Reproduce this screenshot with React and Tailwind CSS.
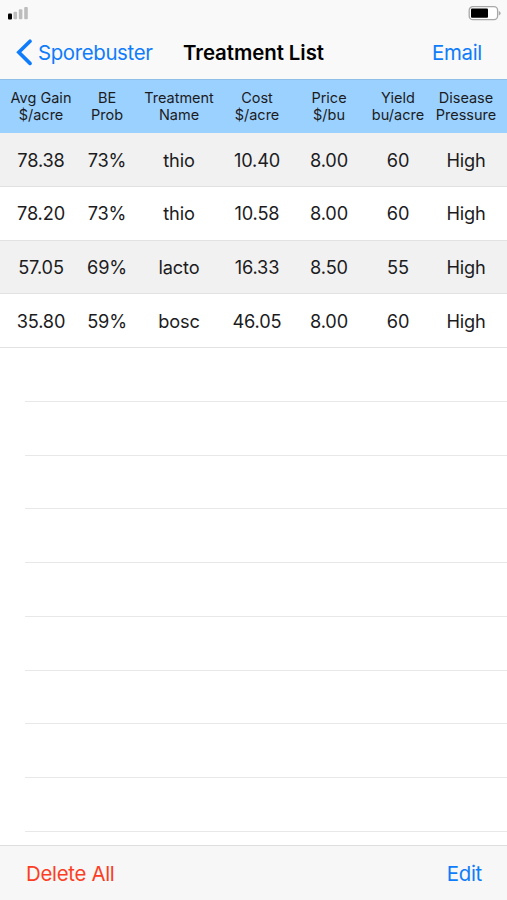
import clsx from "clsx";

const columns = [
  { top: "Avg Gain", bottom: "$/acre", key: "gain" },
  { top: "BE", bottom: "Prob", key: "prob" },
  { top: "Treatment", bottom: "Name", key: "name" },
  { top: "Cost", bottom: "$/acre", key: "cost" },
  { top: "Price", bottom: "$/bu", key: "price" },
  { top: "Yield", bottom: "bu/acre", key: "yield" },
  { top: "Disease", bottom: "Pressure", key: "pressure" },
];

const treatments = [
  { gain: "78.38", prob: "73%", name: "thio", cost: "10.40", price: "8.00", yield: "60", pressure: "High" },
  { gain: "78.20", prob: "73%", name: "thio", cost: "10.58", price: "8.00", yield: "60", pressure: "High" },
  { gain: "57.05", prob: "69%", name: "lacto", cost: "16.33", price: "8.50", yield: "55", pressure: "High" },
  { gain: "35.80", prob: "59%", name: "bosc", cost: "46.05", price: "8.00", yield: "60", pressure: "High" },
];

const EMPTY_ROWS = 9;

const gridCols = "grid grid-cols-[82px_50px_94px_62px_82px_56px_80px]";

function StatusBar() {
  return (
    <div className="flex h-[26px] items-start justify-between pl-2 pr-[6px] pt-[6px]">
      <svg width="20" height="14" viewBox="0 0 20 14">
        <rect x="0" y="7.5" width="4" height="6" rx="1" fill="#000" />
        <rect x="5.5" y="5.7" width="3.6" height="7.5" rx="1" fill="#bdbdbd" />
        <rect x="10.8" y="3.3" width="3.6" height="9.9" rx="1" fill="#bdbdbd" />
        <rect x="16.2" y="1" width="3.6" height="12.2" rx="1" fill="#bdbdbd" />
      </svg>
      <svg width="33" height="15" viewBox="0 0 33 15">
        <rect x="1.2" y="0.7" width="28.4" height="13" rx="3.6" fill="#fff" stroke="#a8a8a8" strokeWidth="1.3" />
        <rect x="3" y="2.4" width="17" height="9.4" rx="1" fill="#000" />
        <path d="M30.8 5v4.6c1.2-.5 1.8-1.3 1.8-2.3s-.6-1.8-1.8-2.3z" fill="#a8a8a8" />
      </svg>
    </div>
  );
}

function NavBar() {
  return (
    <div className="grid h-[53px] grid-cols-[1fr_auto_1fr] items-center px-4 text-[20.4px]">
      <button className="flex items-center gap-[5px] text-[#0f7cfb]">
        <svg width="17" height="27" viewBox="0 0 17 27" fill="none">
          <path
            d="M14 2.2L2.8 13.3l11.2 11.1"
            stroke="currentColor"
            strokeWidth="3.6"
            strokeLinecap="round"
            strokeLinejoin="miter"
          />
        </svg>
        <span className="pt-[2px] tracking-[-0.35px]">Sporebuster</span>
      </button>
      <h1 className="pt-[2px] font-semibold tracking-[-0.05px] text-black">Treatment List</h1>
      <button className="pr-[9px] pt-[2px] text-right tracking-[-0.3px] text-[#0f7cfb]">Email</button>
    </div>
  );
}

export default function App() {
  return (
    <div className="flex h-[900px] w-[507px] flex-col overflow-hidden bg-white font-['Inter',sans-serif] text-[#1c1c1e]">
      <header className="bg-[#f9f9f9]">
        <StatusBar />
        <NavBar />
      </header>

      {/* Column headings */}
      <div
        className={clsx(
          gridCols,
          "h-[54px] shrink-0 items-center border-t border-[#8fbfe6] bg-[#9bd1ff] pb-[2px] text-center text-[14.5px] leading-[17px]"
        )}
      >
        {columns.map((col) => (
          <div key={col.key} className="whitespace-nowrap">
            <div>{col.top}</div>
            <div>{col.bottom}</div>
          </div>
        ))}
      </div>

      <main className="flex-1 overflow-hidden">
        {treatments.map((row, i) => (
          <div
            key={i}
            className={clsx(
              gridCols,
              "h-[53.75px] items-center border-b border-[#e2e2e3] pt-[2px] text-center text-[18.2px] tracking-[-0.15px]",
              i % 2 === 0 ? "bg-[#f1f1f1]" : "bg-white"
            )}
          >
            {columns.map((col) => (
              <span key={col.key}>{row[col.key]}</span>
            ))}
          </div>
        ))}

        {/* Unused rows keep an inset separator */}
        {Array.from({ length: EMPTY_ROWS }, (_, i) => (
          <div key={i} className="ml-[25px] h-[53.75px] border-b border-[#e8e8ea]" />
        ))}
      </main>

      <footer className="flex h-[55px] shrink-0 items-center justify-between border-t border-[#dedede] bg-[#f7f7f7] pl-[26px] pr-[25px] pt-[2px] text-[20.4px] tracking-[-0.3px]">
        <button className="text-[#fc3d24]">Delete All</button>
        <button className="text-[#0f7cfb]">Edit</button>
      </footer>
    </div>
  );
}
